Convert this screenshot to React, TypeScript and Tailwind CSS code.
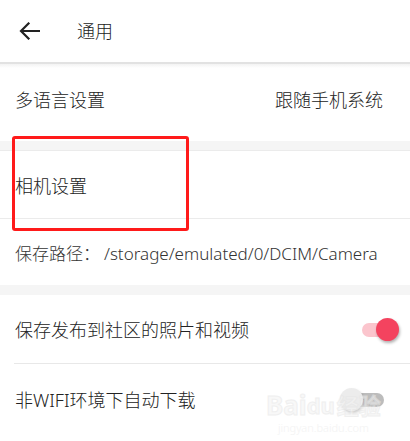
import React from "react";

const font = { fontFamily: '"Noto Sans", "Noto Sans CJK SC", sans-serif' };

function Toggle({ on }: { on: boolean }) {
  return (
    <div className="relative w-[44px] h-[24px]">
      {on ? (
        <>
          <div className="absolute left-[0px] top-[5px] w-[30px] h-[14px] rounded-full bg-[#fbc5cd]" />
          <div className="absolute left-[14px] top-[0px] w-[23px] h-[23px] rounded-full bg-[#f4435f] shadow-[1px_2px_3px_rgba(0,0,0,0.3)]" />
        </>
      ) : (
        <>
          <div className="absolute left-[3px] top-[5px] w-[33px] h-[14px] rounded-full bg-[#bcbcbc]" />
          <div className="absolute left-[-8px] top-[0px] w-[23px] h-[23px] rounded-full bg-[#ececec] shadow-[1px_2px_3px_rgba(0,0,0,0.2)]" />
        </>
      )}
    </div>
  );
}

export default function App() {
  return (
    <div className="relative w-[410px] h-[441px] overflow-hidden bg-white text-[#222] font-light" style={font}>
      {/* Header */}
      <div className="h-[64px] flex items-center border-b-2 border-[#e2e2e2]">
        <div className="w-[58px] flex items-center pl-[19px]">
          <svg width="21" height="18" viewBox="0 0 21 18" fill="none">
            <path d="M20 9H2.5M9.5 1.5L2 9l7.5 7.5" stroke="#222" strokeWidth="2.2" strokeLinecap="square" />
          </svg>
        </div>
        <span className="ml-[19px] text-[18px] leading-[24px]">通用</span>
      </div>
      <div className="h-[4px] bg-gradient-to-b from-[#f3f3f3] to-white" />

      {/* Row 1 */}
      <div className="h-[73px] flex items-center justify-between pl-[15px] pr-[27px] pb-[9px]">
        <span className="text-[18px] leading-[24px]">多语言设置</span>
        <span className="text-[18px] leading-[24px]">跟随手机系统</span>
      </div>
      <div className="h-[10px] bg-[#f5f5f5] border-b border-[#ebebeb]" />

      {/* Camera settings */}
      <div className="h-[68px] flex items-center pl-[15px] pt-[3px] border-b border-[#ebebeb]">
        <span className="text-[18px] leading-[24px]">相机设置</span>
      </div>
      <div className="h-[66px] flex items-center pl-[15px] pt-[4px] text-[#333]">
        <span className="text-[17px] leading-[24px]">保存路径：</span>
        <span className="text-[17px] leading-[24px] ml-[4px]">/storage/emulated/0/DCIM/Camera</span>
      </div>
      <div className="h-[10px] bg-[#f5f5f5]" />

      {/* Toggles */}
      <div className="ml-[14px] border-b border-[#e8e8e8]">
        <div className="h-[68px] flex items-center justify-between pr-[4px] pt-[1px]">
          <span className="text-[18px] leading-[24px] pl-[1px]">保存发布到社区的照片和视频</span>
          <Toggle on />
        </div>
      </div>
      <div className="h-[67px] flex items-center justify-between pl-[15px] pr-[18px] pt-[4px]">
        <span className="text-[18px] leading-[24px]">非WIFI环境下自动下载</span>
        <Toggle on={false} />
      </div>

      {/* Red highlight box */}
      <div className="absolute left-[12px] top-[136px] w-[177px] h-[95px] border-[3px] border-[#ff1a1a] rounded-[3px] pointer-events-none" />

      {/* Watermark */}
      <div className="absolute left-[266px] top-[392px] pointer-events-none flex flex-col items-center opacity-60">
        <div className="flex items-end text-[26px] leading-[26px] font-bold text-[#f4f4f4]" style={{ WebkitTextStroke: "1px #e6e6e6" }}>
          <span>Bai</span>
          <span className="text-[22px]">du</span>
          <span className="text-[22px] ml-[2px]">经验</span>
        </div>
        <div className="text-[11px] leading-[14px] text-[#ececec] mt-[3px]">jingyan.baidu.com</div>
      </div>
    </div>
  );
}
